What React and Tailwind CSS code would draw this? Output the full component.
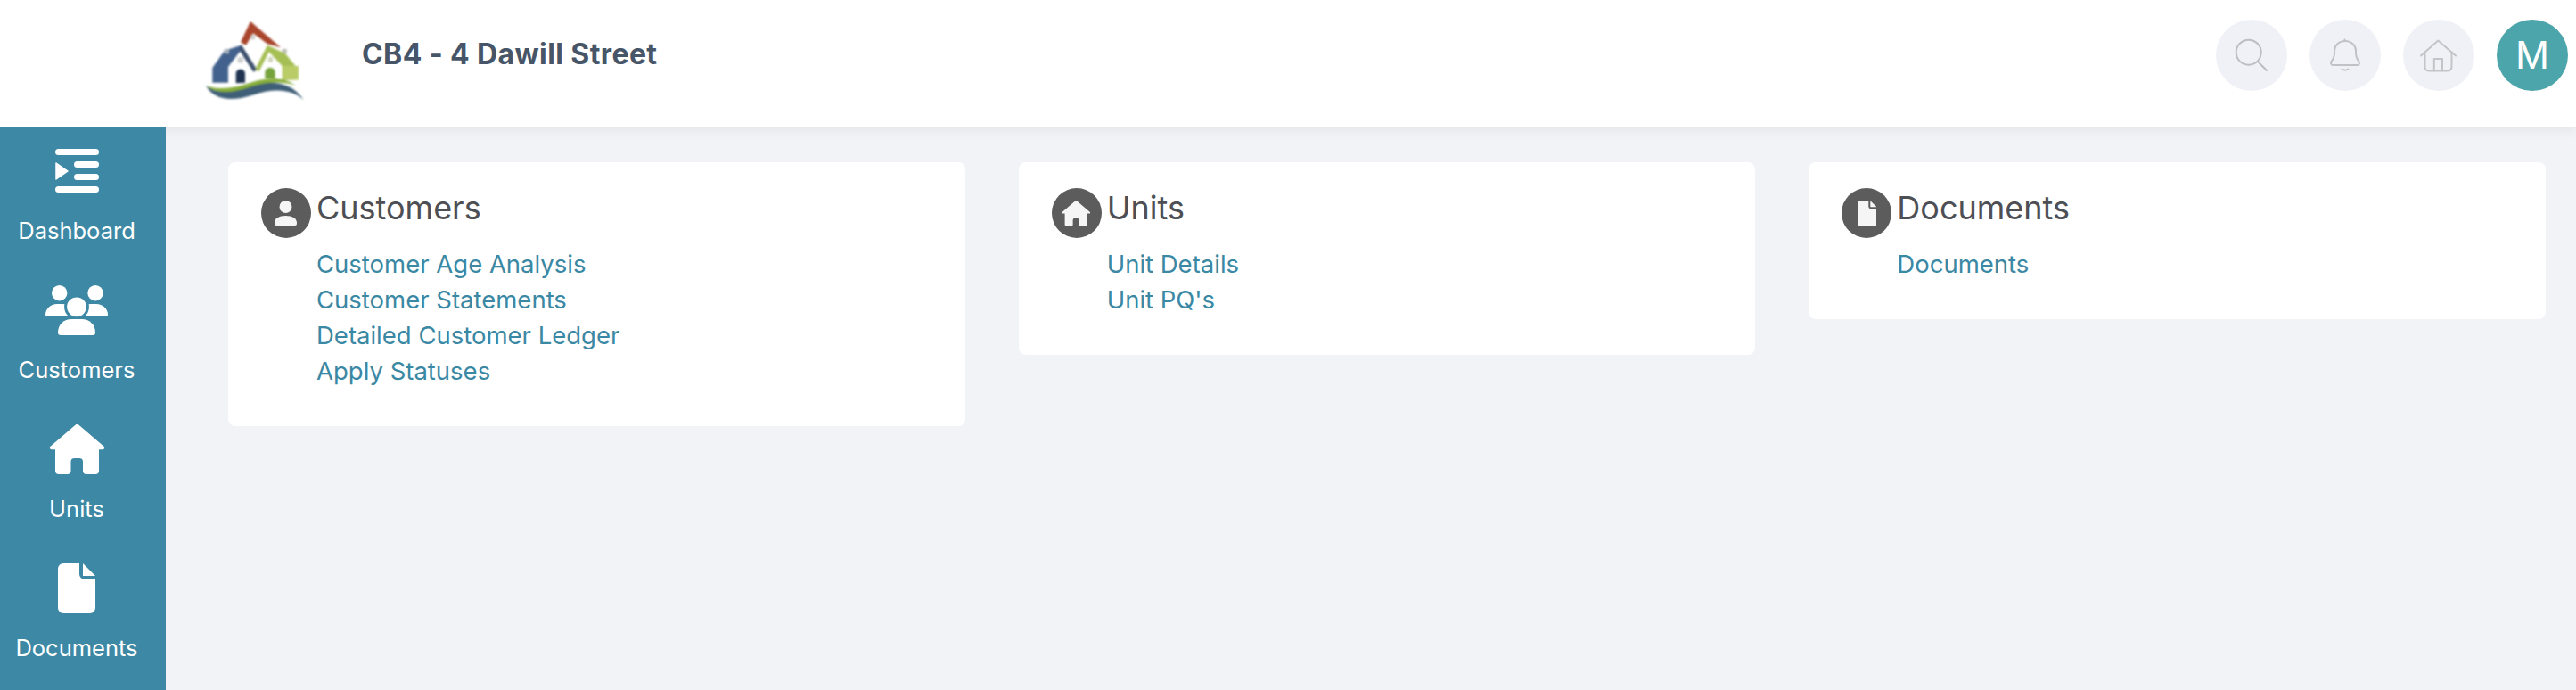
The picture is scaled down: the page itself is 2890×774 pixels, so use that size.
const FONT = "font-['Inter','Liberation_Sans',sans-serif]";

function DashIcon() {
  return (
    <svg width="49" height="50" viewBox="0 0 49 50" fill="#fff">
      <rect x="0" y="0" width="49" height="7" rx="3.5" />
      <rect x="21" y="14" width="28" height="7" rx="3.5" />
      <rect x="21" y="28" width="28" height="7" rx="3.5" />
      <rect x="0" y="42" width="49" height="7" rx="3.5" />
      <path d="M1 16 L14 25 L1 34 Z" stroke="#fff" strokeWidth="1.5" strokeLinejoin="round" />
    </svg>
  );
}

function PeopleIcon() {
  return (
    <svg width="70" height="56" viewBox="0 0 70 56" fill="#fff">
      <circle cx="15.7" cy="8.7" r="8.7" />
      <circle cx="56" cy="8.7" r="8.7" />
      <path d="M0 33 C0 26 6 21 13 21 H19 C26 21 30 25 30 35 H2 C1 35 0 34 0 33 Z" />
      <path d="M70 33 C70 26 64 21 57 21 H51 C44 21 40 25 40 35 H68 C69 35 70 34 70 33 Z" />
      <circle cx="35" cy="24.3" r="12.4" stroke="#3d88a4" strokeWidth="3" />
      <path d="M14 53 C14 44 21 38 29 38 H41 C49 38 56 44 56 53 C56 55 55 56 53 56 H17 C15 56 14 55 14 53 Z" />
    </svg>
  );
}

function HouseIcon({ width = 63, height = 56, color = "#fff" }) {
  return (
    <svg width={width} height={height} viewBox="0 0 63 56" fill={color}>
      <path d="M29.5 0.8 a3 3 0 0 1 4 0 L61.8 25 a2 2 0 0 1 -1.3 3.2 H56 V52 a4 4 0 0 1 -4 4 H42 a4 4 0 0 1 -4 -4 V42 a4 4 0 0 0 -4 -4 H28.5 a4 4 0 0 0 -4 4 V52 a4 4 0 0 1 -4 4 H11 a4 4 0 0 1 -4 -4 V28.2 H2.5 a2 2 0 0 1 -1.3 -3.2 Z" />
    </svg>
  );
}

function DocIcon({ width = 42, height = 56, color = "#fff" }) {
  return (
    <svg width={width} height={height} viewBox="0 0 42 56" fill={color}>
      <path d="M6 0 H24 V12 a6 6 0 0 0 6 6 H42 V50 a6 6 0 0 1 -6 6 H6 a6 6 0 0 1 -6 -6 V6 a6 6 0 0 1 6 -6 Z" />
      <path d="M28 0 L42 14 H28 Z" />
    </svg>
  );
}

function PersonIcon() {
  return (
    <svg width="56" height="56" viewBox="0 0 56 56" fill="#f5f5f5">
      <circle cx="27.5" cy="21" r="7" />
      <path d="M15 39 C15 34 20 31 27.5 31 C35 31 40 34 40 39 V40 a2 2 0 0 1 -2 2 H17 a2 2 0 0 1 -2 -2 Z" />
    </svg>
  );
}

function Logo() {
  return (
    <svg width="150" height="120" viewBox="0 0 450 360" className="blur-[0.8px] shrink-0">
      <path d="M183 42 L285 130 L240 118 L192 82 L168 122 L150 112 Z" fill="#a8452c" />
      <rect x="183" y="88" width="15" height="15" fill="#cfcfcf" />
      <path d="M152 122 L96 140 L55 198 V248 H108 V195 L150 140 Z" fill="#42618c" />
      <path d="M152 120 L205 205 L193 212 L145 138 Z" fill="#3c4f6e" />
      <rect x="95" y="135" width="16" height="16" fill="#a9b0bb" />
      <rect x="140" y="163" width="18" height="18" fill="#cfcfcf" />
      <path d="M134 250 V215 a16 16 0 0 1 31 0 V248 Z" fill="#1f3350" />
      <path d="M198 205 L240 122 L300 150 L345 205 V238 L290 240 V192 L245 145 L212 210 Z" fill="#a6bf55" />
      <rect x="290" y="135" width="15" height="15" fill="#b8bdb0" />
      <rect x="243" y="162" width="15" height="17" fill="#cfd6bd" />
      <path d="M232 234 V214 a17 17 0 0 1 34 0 V234 Z" fill="#77a33d" />
      <rect x="292" y="192" width="53" height="46" fill="#b9cc68" />
      <path d="M33 258 C70 290 120 278 170 262 C240 238 320 240 362 306 C320 268 260 266 190 290 C120 312 60 308 33 258 Z" fill="#3f5f78" />
      <path d="M33 258 C90 278 140 262 190 246 C250 228 300 232 335 258 C280 240 230 248 180 264 C120 284 70 288 33 258 Z" fill="#86ad3a" />
    </svg>
  );
}

function SearchIcon() {
  return (
    <svg width="80" height="80" viewBox="0 0 80 80" fill="none" stroke="#bdbdc2" strokeWidth="2">
      <circle cx="36.7" cy="36.7" r="14" />
      <path d="M47 47 L57 57" strokeLinecap="round" />
    </svg>
  );
}

function BellIcon() {
  return (
    <svg width="80" height="80" viewBox="0 0 80 80" fill="none" stroke="#c2c2c6" strokeWidth="2" strokeLinecap="round">
      <path d="M26 51 H54 a2.5 2.5 0 0 0 1.5 -4 C53 44 52 41 52 37 V35 C52 29 47 24 40 24 S28 29 28 35 V37 C28 41 27 44 24.500 47 A2.500 2.500 0 0 0 26 51 Z" />
      <path d="M39.500 22.500 V24" />
      <path d="M36.500 55.500 Q40 58 43.500 55.500" />
    </svg>
  );
}

function HomeLineIcon() {
  return (
    <svg width="80" height="80" viewBox="0 0 80 80" fill="none" stroke="#c4c4c8" strokeWidth="2" strokeLinecap="round" strokeLinejoin="round">
      <path d="M20 40.500 L39.300 23.500 L59 40.500" />
      <path d="M24.500 36.500 V53 a4.500 4.500 0 0 0 4.500 4.500 H50 a4.500 4.500 0 0 0 4.500 -4.500 V36.500" />
      <path d="M34.800 57.500 V44 H44 V57.500" />
    </svg>
  );
}

function RoundButton({ children }) {
  return (
    <div className="w-20 h-20 rounded-full bg-[#f0f1f6] flex items-center justify-center">{children}</div>
  );
}

function SideItem({ icon, label }) {
  return (
    <div className="h-[156px] flex flex-col items-center">
      <div className="h-[60px] flex items-center justify-center">{icon}</div>
      <span className="text-[25.5px] leading-[32px] text-white whitespace-nowrap mt-[21px]">{label}</span>
    </div>
  );
}

function Card({ icon, title, links }) {
  return (
    <div className="flex-1 bg-white rounded-lg pl-[37px] pt-[29px] pb-[42px]">
      <div className="flex items-start h-[56px]">
        <div className="w-14 h-14 rounded-full bg-[#5c5c5c] flex items-center justify-center shrink-0">{icon}</div>
        <h2 className="ml-[6px] text-[36px] leading-[46px] text-[#4d4f54] font-normal -mt-px">{title}</h2>
      </div>
      <div className="mt-[9px] ml-[62px] flex flex-col">
        {links.map((l) => (
          <a key={l} className="h-[40px] leading-[40px] text-[27.5px] text-[#3a88a3] whitespace-nowrap">{l}</a>
        ))}
      </div>
    </div>
  );
}

export default function App() {
  return (
    <div className={`w-[2890px] h-[774px] overflow-hidden bg-[#f1f3f7] flex flex-col ${FONT}`}>
      <header className="relative z-10 h-[142px] shrink-0 bg-white shadow-[0_3px_14px_rgba(0,0,0,0.07)] flex items-start">
        <div className="ml-[220px] mt-[10px]"><Logo /></div>
        <h1 className="ml-[36px] mt-[39px] text-[32px] leading-[44px] font-bold text-[#475569] tracking-[0.4px] whitespace-nowrap">CB4 - 4 Dawill Street</h1>
        <div className="ml-auto mr-[9px] mt-[22px] flex gap-[25px]">
          <RoundButton><SearchIcon /></RoundButton>
          <RoundButton><BellIcon /></RoundButton>
          <RoundButton><HomeLineIcon /></RoundButton>
          <div className="w-20 h-20 rounded-full bg-[#4ca5aa] flex items-center justify-center text-white text-[42px] leading-none">M</div>
        </div>
      </header>
      <div className="flex flex-1 min-h-0">
        <aside className="relative z-20 w-[186px] shrink-0 bg-[#3d88a4] pt-[20px] pr-[14px]">
          <SideItem icon={<DashIcon />} label="Dashboard" />
          <SideItem icon={<PeopleIcon />} label="Customers" />
          <SideItem icon={<HouseIcon />} label="Units" />
          <SideItem icon={<DocIcon />} label="Documents" />
        </aside>
        <main className="flex-1 pl-[70px] pr-[34px] pt-[40px] flex items-start gap-[60px]">
          <Card icon={<PersonIcon />} title="Customers" links={["Customer Age Analysis", "Customer Statements", "Detailed Customer Ledger", "Apply Statuses"]} />
          <Card icon={<HouseIcon width={32.5} height={29} color="#f5f5f5" />} title="Units" links={["Unit Details", "Unit PQ's"]} />
          <Card icon={<DocIcon width={21.5} height={29} color="#f5f5f5" />} title="Documents" links={["Documents"]} />
        </main>
      </div>
    </div>
  );
}
